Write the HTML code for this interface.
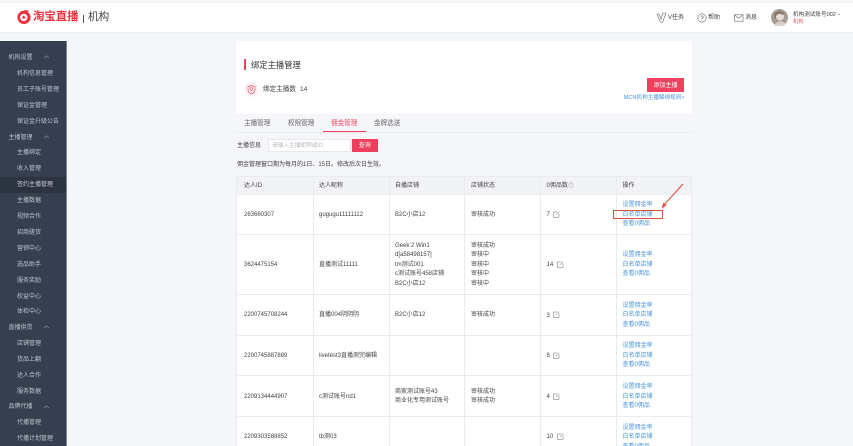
<!DOCTYPE html>
<html lang="zh"><head><meta charset="utf-8"><title>绑定主播管理</title>
<style>
html,body{margin:0;padding:0;width:853px;height:446px;overflow:hidden;background:#f5f6f9}
#w{position:relative;width:853px;height:446px;overflow:hidden;font-family:"Liberation Sans","Noto Sans CJK SC",sans-serif;font-size:6px;color:#444;filter:blur(.35px)}
.b{position:absolute}
.t{position:absolute;line-height:10px;white-space:nowrap;margin-top:.7px}
.s{color:#bfc4cd}
.g{left:8.5px}.i{left:17px}
.a{color:#4a94de}
.v{position:absolute;background:#e9ebef;width:.8px;top:176px;height:270px}
.h{position:absolute;background:#e9ebef;height:.8px;left:236px;width:455px}
</style></head><body><div id="w">
<div class="b" style="left:0;top:2px;width:853px;height:1px;background:#eff0f2"></div>
<div class="b" style="left:0;top:3px;width:853px;height:29px;background:#fff;border-bottom:.7px solid #eceef0"></div>
<svg class="b" style="left:16px;top:9px" width="16" height="16" viewBox="0 0 16 16"><path d="M7.6 1.8 A6.6 6.6 0 1 0 14.6 8.4 A6.6 6.6 0 0 0 11.5 3 L13 1.2 L9 1.2 Z" fill="#ee2f3d"/><circle cx="7.8" cy="8.4" r="3.7" fill="#fff"/><path d="M6.6 6.4 L10 8.4 L6.6 10.4Z" fill="#ee2f3d"/></svg>
<div class="t" style="left:33px;top:10.5px;font-size:11.4px;line-height:13px;color:#ee3340;font-weight:700">淘宝直播</div>
<div class="b" style="left:83px;top:14.5px;width:.8px;height:8px;background:#555"></div>
<div class="t" style="left:88px;top:10.5px;font-size:10.6px;line-height:13px;color:#444">机构</div>

<svg class="b" style="left:656px;top:12px" width="12" height="12" viewBox="0 0 12 12" fill="none" stroke="#666" stroke-width=".6"><path d="M1 2 L3 2 L5 7 L7 1 L10 1 L6.5 10.5 L4.5 10.5 Z"/></svg>
<div class="t" style="left:668px;top:12.5px">V任务</div>
<svg class="b" style="left:697px;top:13px" width="10" height="10" viewBox="0 0 10 10" fill="none" stroke="#666" stroke-width=".6"><circle cx="5" cy="5" r="4.2"/><path d="M3.8 3.8 A1.2 1.2 0 1 1 5 5.2 V6 M5 7 V7.6"/></svg>
<div class="t" style="left:708px;top:12.5px">帮助</div>
<svg class="b" style="left:734px;top:14px" width="10" height="8" viewBox="0 0 10 8" fill="none" stroke="#666" stroke-width=".6"><rect x=".4" y=".8" width="8.6" height="6.4"/><path d="M.4 .8 L4.7 4.4 L9 .8"/></svg>
<div class="t" style="left:745px;top:12.5px">消息</div>
<svg class="b" style="left:771px;top:9px" width="17" height="17" viewBox="0 0 17 17"><circle cx="8.5" cy="8.5" r="8.5" fill="#a89c92"/><circle cx="9" cy="7.5" r="4" fill="#e6dcd4"/><path d="M3 16 Q9 9 15 15 L12 17 H5Z" fill="#d8d0ca"/><path d="M3 5 Q8 0 13 4 L12 6 Q8 3 5 7 L4 11Z" fill="#85756a"/></svg>
<div class="t" style="left:793px;top:9.5px;font-size:5.6px">机构测试账号002</div>
<div class="b" style="left:838px;top:14px;border:1.3px solid transparent;border-top-color:#555"></div>
<div class="t" style="left:793px;top:16px;font-size:5.2px;color:#ee4a5e">机构</div>

<div class="b" style="left:0;top:40.5px;width:66px;height:406px;background:#363f50;border-right:.7px solid #7d8594"></div>
<div class="b" style="left:0;top:177px;width:66px;height:15.5px;background:#2c3442"></div>
<div class="t s g" style="top:52px">机构设置</div>
<div class="t s i" style="top:68px">机构信息管理</div>
<div class="t s i" style="top:84px">员工子账号管理</div>
<div class="t s i" style="top:100px">保证金管理</div>
<div class="t s i" style="top:116px">保证金升级公告</div>
<div class="t s g" style="top:132px">主播管理</div>
<div class="t s i" style="top:147px">主播绑定</div>
<div class="t s i" style="top:163px">收入管理</div>
<div class="t s i" style="top:179px;color:#c8ccd3">签约主播管理</div>
<div class="t s i" style="top:195px">主播数据</div>
<div class="t s i" style="top:211px">视频合作</div>
<div class="t s i" style="top:227px">招商磋货</div>
<div class="t s i" style="top:243px">营销中心</div>
<div class="t s i" style="top:259px">选品助手</div>
<div class="t s i" style="top:275px">服务奖励</div>
<div class="t s i" style="top:291px">权益中心</div>
<div class="t s i" style="top:306.5px">体检中心</div>
<div class="t s g" style="top:322px">直播供货</div>
<div class="t s i" style="top:338px">店铺管理</div>
<div class="t s i" style="top:354px">货品上翻</div>
<div class="t s i" style="top:370px">达人合作</div>
<div class="t s i" style="top:386px">服务数据</div>
<div class="t s g" style="top:401px">品牌代播</div>
<div class="t s i" style="top:417px">代播管理</div>
<div class="t s i" style="top:433px">代播计划管理</div>
<svg class="b" style="left:43px;top:55px" width="7" height="4" fill="none" stroke="#8f96a3" stroke-width=".6"><path d="M1 3 L3.5 .8 L6 3"/></svg>
<svg class="b" style="left:43px;top:135px" width="7" height="4" fill="none" stroke="#8f96a3" stroke-width=".6"><path d="M1 3 L3.5 .8 L6 3"/></svg>
<svg class="b" style="left:43px;top:325px" width="7" height="4" fill="none" stroke="#8f96a3" stroke-width=".6"><path d="M1 3 L3.5 .8 L6 3"/></svg>
<svg class="b" style="left:43px;top:405px" width="7" height="4" fill="none" stroke="#8f96a3" stroke-width=".6"><path d="M1 3 L3.5 .8 L6 3"/></svg>

<div class="b" style="left:236px;top:41px;width:456px;height:73px;background:#fff"></div>
<div class="b" style="left:244px;top:59px;width:2px;height:11px;background:#ee3f5c"></div>
<div class="t" style="left:251px;top:59px;font-size:8.3px;color:#333">绑定主播管理</div>
<svg class="b" style="left:244px;top:82px" width="15" height="15" viewBox="0 0 15 15" fill="none"><circle cx="7.5" cy="7.5" r="7.2" fill="#fdf0f2"/><path d="M7.5 3.5 L11 4.8 V8 Q11 10.5 7.5 12 Q4 10.5 4 8 V4.8Z" stroke="#ee5a70" stroke-width=".7"/><circle cx="7.5" cy="7" r="1.4" stroke="#ee5a70" stroke-width=".6"/></svg>
<div class="t" style="left:263px;top:84px;font-size:6.6px;color:#444">绑定主播数</div>
<div class="t" style="left:300px;top:84px;font-size:6.6px;color:#444">14</div>
<div class="b" style="left:646.7px;top:78px;width:37.6px;height:13.5px;background:#ef415f;border-radius:.6px"></div>
<div class="t" style="left:646.7px;top:80px;width:37.6px;text-align:center;color:#fff">添加主播</div>
<div class="t a" style="right:168.5px;top:92px;font-size:5.6px">MCN机构主播解绑规则&gt;</div>

<div class="b" style="left:236px;top:131.5px;width:456px;height:.7px;background:#eaecf0"></div>
<div class="b" style="left:322.7px;top:130.7px;width:43.3px;height:.9px;background:#ee415f"></div>
<div class="t" style="left:244px;top:118px;font-size:6.6px;color:#666">主播管理</div>
<div class="t" style="left:288px;top:118px;font-size:6.6px;color:#666">权限管理</div>
<div class="t" style="left:331px;top:118px;font-size:6.6px;color:#ee415f">佣金管理</div>
<div class="t" style="left:374px;top:118px;font-size:6.6px;color:#666">金牌选送</div>

<div class="t" style="left:237px;top:140px">主播信息</div>
<div class="b" style="left:268px;top:138.5px;width:83px;height:13.5px;background:#fff;border:.6px solid #e6e8ec;box-sizing:border-box"></div>
<div class="t" style="left:272px;top:140px;color:#b5b8be;font-size:5.7px">请输入主播昵称或ID</div>
<div class="b" style="left:351.5px;top:138.5px;width:26.5px;height:13.5px;background:#ee3f5c"></div>
<div class="t" style="left:351.5px;top:140px;width:26.5px;text-align:center;color:#fff">查询</div>
<div class="t" style="left:237px;top:159px;color:#444">佣金管理窗口期为每月的1日、15日。修改后次日生效。</div>

<div class="b" style="left:236px;top:176px;width:455px;height:270px;background:#fff"></div>
<div class="b" style="left:236px;top:176px;width:455px;height:18px;background:#f2f3f6"></div>
<div class="v" style="left:236px"></div><div class="v" style="left:312.5px"></div><div class="v" style="left:388.5px"></div><div class="v" style="left:463.5px"></div><div class="v" style="left:539.5px"></div><div class="v" style="left:615.5px"></div><div class="v" style="left:691px"></div>
<div class="h" style="top:176px"></div><div class="h" style="top:193.7px"></div><div class="h" style="top:234.3px"></div><div class="h" style="top:294.3px"></div><div class="h" style="top:335px"></div><div class="h" style="top:375.3px"></div><div class="h" style="top:416.3px"></div>

<div class="t" style="left:244px;top:180px">达人ID</div>
<div class="t" style="left:319px;top:180px">达人昵称</div>
<div class="t" style="left:395px;top:180px">自播店铺</div>
<div class="t" style="left:471px;top:180px">店铺状态</div>
<div class="t" style="left:546.5px;top:180px">0佣品数</div>
<svg class="b" style="left:568px;top:181.5px" width="6" height="6" viewBox="0 0 6 6" fill="none" stroke="#999" stroke-width=".4"><circle cx="3" cy="3" r="2.4"/><path d="M2.3 2.3 A.8.8 0 1 1 3 3.2 V3.6 M3 4.2 V4.6"/></svg>
<div class="t" style="left:622.5px;top:180px">操作</div>

<div class="t" style="left:244px;top:209px">263660307</div>
<div class="t" style="left:319px;top:209px">gugugu11111112</div>
<div class="t" style="left:395px;top:209px">B2C小店12</div>
<div class="t" style="left:471px;top:209px">审核成功</div>
<div class="t" style="left:546.5px;top:209px">7</div>

<div class="t" style="left:244px;top:259px">3624475154</div>
<div class="t" style="left:319px;top:259px">直播测试11111</div>
<div class="t" style="left:395px;top:240px">Geek 2 Win1</div>
<div class="t" style="left:395px;top:249.5px">d[a58498157]</div>
<div class="t" style="left:395px;top:259px">tm测试001</div>
<div class="t" style="left:395px;top:268.5px">c测试账号458店铺</div>
<div class="t" style="left:395px;top:278px">B2C小店12</div>
<div class="t" style="left:471px;top:240px">审核成功</div>
<div class="t" style="left:471px;top:249.5px">审核中</div>
<div class="t" style="left:471px;top:259px">审核中</div>
<div class="t" style="left:471px;top:268.5px">审核中</div>
<div class="t" style="left:471px;top:278px">审核中</div>
<div class="t" style="left:546.5px;top:259px">14</div>

<div class="t" style="left:244px;top:309.5px">2200745708244</div>
<div class="t" style="left:319px;top:309.5px">直播004阴阴阴</div>
<div class="t" style="left:395px;top:309.5px">B2C小店12</div>
<div class="t" style="left:471px;top:309.5px">审核成功</div>
<div class="t" style="left:546.5px;top:310px">3</div>

<div class="t" style="left:244px;top:350px">2200745887889</div>
<div class="t" style="left:319px;top:350px">livetest3直播测完编辑</div>
<div class="t" style="left:546.5px;top:350px">8</div>

<div class="t" style="left:244px;top:391px">2209134444907</div>
<div class="t" style="left:319px;top:391px">c测试账号nd1</div>
<div class="t" style="left:395px;top:386px">商家测试账号43</div>
<div class="t" style="left:395px;top:395.5px">商业化专用测试账号</div>
<div class="t" style="left:471px;top:386px">审核成功</div>
<div class="t" style="left:471px;top:395.5px">审核成功</div>
<div class="t" style="left:546.5px;top:391px">4</div>

<div class="t" style="left:244px;top:431.5px">2209303588852</div>
<div class="t" style="left:319px;top:431.5px">tb测03</div>
<div class="t" style="left:546.5px;top:431.5px">10</div>

<svg class="b" style="left:553px;top:210.5px" width="7" height="7" viewBox="0 0 7 7" fill="none" stroke="#666" stroke-width=".5"><path d="M.5 1 H4.5 M.5 1 V6.3 H6 V2.5 M3 4 L6.3 .7"/></svg>
<svg class="b" style="left:556.5px;top:260.5px" width="7" height="7" viewBox="0 0 7 7" fill="none" stroke="#666" stroke-width=".5"><path d="M.5 1 H4.5 M.5 1 V6.3 H6 V2.5 M3 4 L6.3 .7"/></svg>
<svg class="b" style="left:553px;top:311px" width="7" height="7" viewBox="0 0 7 7" fill="none" stroke="#666" stroke-width=".5"><path d="M.5 1 H4.5 M.5 1 V6.3 H6 V2.5 M3 4 L6.3 .7"/></svg>
<svg class="b" style="left:553px;top:351.5px" width="7" height="7" viewBox="0 0 7 7" fill="none" stroke="#666" stroke-width=".5"><path d="M.5 1 H4.5 M.5 1 V6.3 H6 V2.5 M3 4 L6.3 .7"/></svg>
<svg class="b" style="left:553px;top:392.5px" width="7" height="7" viewBox="0 0 7 7" fill="none" stroke="#666" stroke-width=".5"><path d="M.5 1 H4.5 M.5 1 V6.3 H6 V2.5 M3 4 L6.3 .7"/></svg>
<svg class="b" style="left:556.5px;top:433px" width="7" height="7" viewBox="0 0 7 7" fill="none" stroke="#666" stroke-width=".5"><path d="M.5 1 H4.5 M.5 1 V6.3 H6 V2.5 M3 4 L6.3 .7"/></svg>

<div class="t a" style="left:622.5px;top:199.5px">设置佣金率</div><div class="t a" style="left:622.5px;top:209px">白名单店铺</div><div class="t a" style="left:622.5px;top:218.5px">查看0佣品</div>
<div class="t a" style="left:622.5px;top:249.7px">设置佣金率</div><div class="t a" style="left:622.5px;top:259px">白名单店铺</div><div class="t a" style="left:622.5px;top:268.7px">查看0佣品</div>
<div class="t a" style="left:622.5px;top:300px">设置佣金率</div><div class="t a" style="left:622.5px;top:309.5px">白名单店铺</div><div class="t a" style="left:622.5px;top:319px">查看0佣品</div>
<div class="t a" style="left:622.5px;top:340.5px">设置佣金率</div><div class="t a" style="left:622.5px;top:350px">白名单店铺</div><div class="t a" style="left:622.5px;top:359.5px">查看0佣品</div>
<div class="t a" style="left:622.5px;top:381px">设置佣金率</div><div class="t a" style="left:622.5px;top:391px">白名单店铺</div><div class="t a" style="left:622.5px;top:400px">查看0佣品</div>
<div class="t a" style="left:622.5px;top:422px">设置佣金率</div><div class="t a" style="left:622.5px;top:431.5px">白名单店铺</div><div class="t a" style="left:622.5px;top:441px">查看0佣品</div>

<div class="b" style="left:613.3px;top:210px;width:50px;height:9.3px;border:1.2px solid #e2503f;box-sizing:border-box"></div>
<svg class="b" style="left:655px;top:180px" width="32" height="32" viewBox="0 0 32 32" fill="none"><path d="M28 4 L8 26" stroke="#e2503f" stroke-width="1.1"/><path d="M6.5 28.5 L8.5 22.5 L11.5 25.5Z" fill="#e2503f"/></svg>
</div></body></html>
